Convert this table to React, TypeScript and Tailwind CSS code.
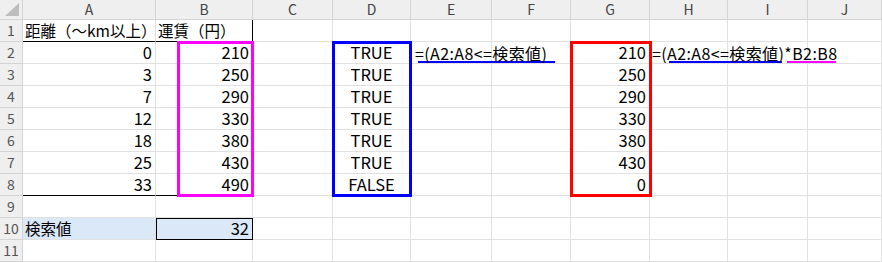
import React from "react";

type Align = "left" | "right" | "center";

type CellDef = {
	text?: string;
	align?: Align;
	cls?: string;
};

const COLS = ["A", "B", "C", "D", "E", "F", "G", "H", "I", "J"];

const fares = [
	[0, 210],
	[3, 250],
	[7, 290],
	[12, 330],
	[18, 380],
	[25, 430],
	[33, 490],
];

const limit = 32;

const NUM = "text-[16.5px]";
const LABEL = "text-[15.5px]";
const FORMULA = "text-[16px] tracking-[0.4px]";

function buildRows(): CellDef[][] {
	const rows: CellDef[][] = [];
	const blank = (): CellDef => ({});

	// header row 1
	rows.push([
		{ text: "距離（～km以上）", align: "left", cls: `${LABEL} border-b-black` },
		{ text: "運賃（円）", align: "left", cls: `${LABEL} border-b-black border-r-black` },
		...Array.from({ length: 8 }, blank),
	]);

	fares.forEach(([km, yen], i) => {
		const hit = km <= limit;
		const last = i === fares.length - 1;
		const edge = last ? "border-b-black" : "";
		rows.push([
			{ text: String(km), align: "right", cls: `${NUM} ${edge}` },
			{ text: String(yen), align: "right", cls: `${NUM} ${edge}` },
			blank(),
			{ text: hit ? "TRUE" : "FALSE", align: "center", cls: NUM },
			i === 0 ? { text: "=(A2:A8<=検索値)", align: "left", cls: `${FORMULA} pl-[4px]` } : blank(),
			blank(),
			{ text: String(hit ? yen : 0), align: "right", cls: NUM },
			i === 0 ? { text: "=(A2:A8<=検索値)*B2:B8", align: "left", cls: FORMULA } : blank(),
			blank(),
			blank(),
		]);
	});

	rows.push(Array.from({ length: 10 }, blank));
	rows.push([
		{ text: "検索値", align: "left", cls: `${LABEL} bg-[#dae8f7]` },
		{
			text: String(limit),
			align: "right",
			cls: `${NUM} bg-[#dae8f7] outline outline-1 outline-black -outline-offset-1`,
		},
		...Array.from({ length: 8 }, blank),
	]);
	rows.push(Array.from({ length: 10 }, blank));
	return rows;
}

function Cell({ cell }: { cell: CellDef }) {
	const align =
		cell.align === "right"
			? "justify-end pr-[3px]"
			: cell.align === "center"
				? "justify-center"
				: "justify-start pl-[2px]";
	return (
		<div
			className={`relative flex items-center overflow-visible whitespace-nowrap border-r border-b border-[#e1e1e1] leading-none text-black ${align} ${cell.cls ?? ""}`}
		>
			{cell.text && <span className="relative z-10">{cell.text}</span>}
		</div>
	);
}

export default function App() {
	const rows = buildRows();

	return (
		<div
			className="relative h-[262px] w-[882px] overflow-hidden bg-white"
			style={{ fontFamily: '"Noto Sans CJK JP", "Noto Sans", sans-serif' }}
		>
			<div className="grid grid-cols-[23px_133px_97px_80px_78px_81px_79px_79px_78px_80px_1fr] grid-rows-[20px_repeat(11,22px)]">
				{/* corner */}
				<div className="relative border-r border-b border-[#d4d4d4] bg-[#efefef]">
					<svg className="absolute right-[3px] bottom-[3px]" width="14" height="13" viewBox="0 0 14 13">
						<polygon points="14,0 14,13 0,13" fill="#bdbdbd" />
					</svg>
				</div>
				{COLS.map((c) => (
					<div
						key={c}
						className="flex items-center justify-center border-r border-b border-[#d4d4d4] bg-[#efefef] text-[14px] text-[#444]"
					>
						{c}
					</div>
				))}

				{rows.map((row, r) => (
					<React.Fragment key={r}>
						<div className="flex items-center justify-center border-r border-b border-[#d4d4d4] bg-[#efefef] text-[14px] text-[#555]">
							{r + 1}
						</div>
						{row.map((cell, c) => (
							<Cell key={c} cell={cell} />
						))}
					</React.Fragment>
				))}
			</div>

			{/* range highlight boxes */}
			<div className="pointer-events-none absolute left-[177px] top-[41px] h-[156px] w-[77px] border-[3px] border-[#ff00ff]" />
			<div className="pointer-events-none absolute left-[332px] top-[41px] h-[156px] w-[80px] border-[3px] border-[#0000ff]" />
			<div className="pointer-events-none absolute left-[570px] top-[41px] h-[156px] w-[82px] border-[3px] border-[#ff0000]" />

			{/* formula underlines */}
			<div className="absolute left-[418px] top-[61px] h-[2px] w-[137px] bg-[#0000ff]" />
			<div className="absolute left-[669px] top-[61px] h-[2px] w-[113px] bg-[#0000ff]" />
			<div className="absolute left-[787px] top-[61px] h-[2px] w-[49px] bg-[#ff00ff]" />
		</div>
	);
}
